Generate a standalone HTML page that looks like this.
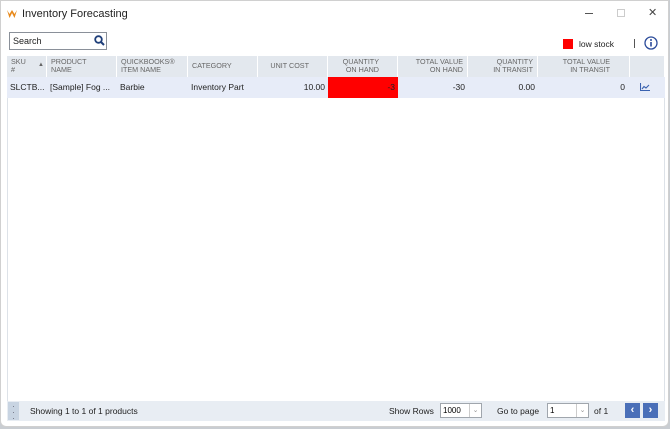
<!DOCTYPE html>
<html><head><style>
*{box-sizing:border-box;margin:0;padding:0}
body{width:670px;height:429px;overflow:hidden;background:#c9cdd2;font-family:"Liberation Sans",sans-serif;position:relative}
.win{position:absolute;left:0;top:0;width:669px;height:427px;background:#fff;border:1px solid #d0d0d0;border-radius:0 0 6px 6px}
.abs{position:absolute}
.t{font-size:8.5px;color:#222}
.h{position:absolute;top:55px;height:21px;background:#e3e8ee;font-size:7.2px;color:#666;line-height:8px;padding-top:2px;border-right:1px solid #fff}
.r{position:absolute;top:76px;height:21px;background:#e7ecf8;font-size:8.5px;color:#222;line-height:21px;padding:0 3px;white-space:nowrap}
</style></head><body>
<div class="win">
<svg class="abs" style="left:6px;top:9px" width="10" height="8" viewBox="0 0 10 8"><path d="M0 0L2.5 8L5 3L7.5 8L10 0L7.5 4L5 0L2.5 4Z" fill="#e8891a"/></svg>
<div class="abs" style="left:21px;top:7px;font-size:11px;color:#222">Inventory Forecasting</div>
<div class="abs" style="left:584px;top:12px;width:8px;height:1px;background:#555"></div>
<div class="abs" style="left:616px;top:8px;width:8px;height:8px;border:1px solid #ccc"></div>
<div class="abs" style="left:647px;top:5px;font-size:11px;color:#444">✕</div>
<div class="abs" style="left:8px;top:31px;width:98px;height:18px;border:1px solid #8a9099;font-size:9px;line-height:16px;padding-left:3px;color:#222">Search</div>
<svg class="abs" style="left:93px;top:34px" width="11" height="11" viewBox="0 0 11 11"><circle cx="4.5" cy="4.5" r="3.3" stroke="#1f3f7a" stroke-width="1.8" fill="none"/><path d="M7 7L10 10" stroke="#1f3f7a" stroke-width="2"/></svg>
<div class="abs" style="left:562px;top:38px;width:10px;height:10px;background:#f00"></div>
<div class="abs t" style="left:578px;top:38px">low stock</div>
<div class="abs" style="left:633px;top:38px;width:1px;height:9px;background:#555"></div>
<svg class="abs" style="left:643px;top:35px" width="14" height="14" viewBox="0 0 14 14"><circle cx="7" cy="7" r="6" stroke="#2b4b9a" stroke-width="1.3" fill="none"/><rect x="6.2" y="6" width="1.6" height="4.5" fill="#2b4b9a"/><circle cx="7" cy="4" r="1" fill="#2b4b9a"/></svg>
<div class="abs" style="left:6px;top:55px;width:658px;height:346px;border:1px solid #dde2e8;border-top:none"></div>
<div class="h" style="left:6px;width:40px;padding-left:4px">SKU<br>#<span style="position:absolute;left:31px;top:5px;font-size:6px">▲</span></div>
<div class="h" style="left:46px;width:70px;padding-left:4px">PRODUCT<br>NAME</div>
<div class="h" style="left:116px;width:71px;padding-left:4px">QUICKBOOKS®<br>ITEM NAME</div>
<div class="h" style="left:187px;width:70px;padding-left:4px;padding-top:6px">CATEGORY</div>
<div class="h" style="left:257px;width:70px;text-align:right;padding-right:18px;padding-top:6px">UNIT COST</div>
<div class="h" style="left:327px;width:70px;text-align:right;padding-right:18px">QUANTITY<br>ON HAND</div>
<div class="h" style="left:397px;width:70px;text-align:right;padding-right:4px">TOTAL VALUE<br>ON HAND</div>
<div class="h" style="left:467px;width:70px;text-align:right;padding-right:4px">QUANTITY<br>IN TRANSIT</div>
<div class="h" style="left:537px;width:92px;text-align:right;padding-right:19px">TOTAL VALUE<br>IN TRANSIT</div>
<div class="h" style="left:629px;width:35px"></div>
<div class="r" style="left:6px;width:40px">SLCTB...</div>
<div class="r" style="left:46px;width:70px">[Sample] Fog ...</div>
<div class="r" style="left:116px;width:71px">Barbie</div>
<div class="r" style="left:187px;width:70px">Inventory Part</div>
<div class="r" style="left:257px;width:70px;text-align:right">10.00</div>
<div class="r" style="left:327px;width:70px;text-align:right;background:#f00">-3</div>
<div class="r" style="left:397px;width:70px;text-align:right">-30</div>
<div class="r" style="left:467px;width:70px;text-align:right">0.00</div>
<div class="r" style="left:537px;width:92px;text-align:right;padding-right:5px">0</div>
<div class="r" style="left:629px;width:35px"><svg style="position:absolute;left:10px;top:6px" width="10" height="8" viewBox="0 0 10 8"><path d="M0.5 0V7.5H10M2 6L4 3.5L6 5L9 2" stroke="#3a62b0" stroke-width="1.1" fill="none"/></svg></div>
<div class="abs" style="left:6px;top:400px;width:658px;height:20px;background:#e8edf3"></div>
<div class="abs" style="left:7px;top:401px;width:11px;height:18px;background:#c8d4e2;color:#556;font-size:8px;text-align:center;line-height:6px;padding-top:2px">·<br>·<br>·</div>
<div class="abs t" style="left:29px;top:405px">Showing 1 to 1 of 1 products</div>
<div class="abs t" style="left:388px;top:405px">Show Rows</div>
<div class="abs" style="left:439px;top:402px;width:42px;height:15px;border:1px solid #a0a6ad;background:#fff;font-size:8px;line-height:13px;padding-left:2px">1000<span style="position:absolute;right:0;top:0;width:12px;height:13px;border-left:1px solid #ccc;color:#999;font-size:7px;text-align:center">⌄</span></div>
<div class="abs t" style="left:496px;top:405px">Go to page</div>
<div class="abs" style="left:546px;top:402px;width:42px;height:15px;border:1px solid #a0a6ad;background:#fff;font-size:8px;line-height:13px;padding-left:2px">1<span style="position:absolute;right:0;top:0;width:12px;height:13px;border-left:1px solid #ccc;color:#999;font-size:7px;text-align:center">⌄</span></div>
<div class="abs t" style="left:593px;top:405px">of 1</div>
<div class="abs" style="left:624px;top:402px;width:15px;height:15px;background:#4a6fb8;color:#fff;font-size:11px;font-weight:bold;text-align:center;line-height:15px">‹</div>
<div class="abs" style="left:642px;top:402px;width:15px;height:15px;background:#4a6fb8;color:#fff;font-size:11px;font-weight:bold;text-align:center;line-height:15px">›</div>
</div>
</body></html>
